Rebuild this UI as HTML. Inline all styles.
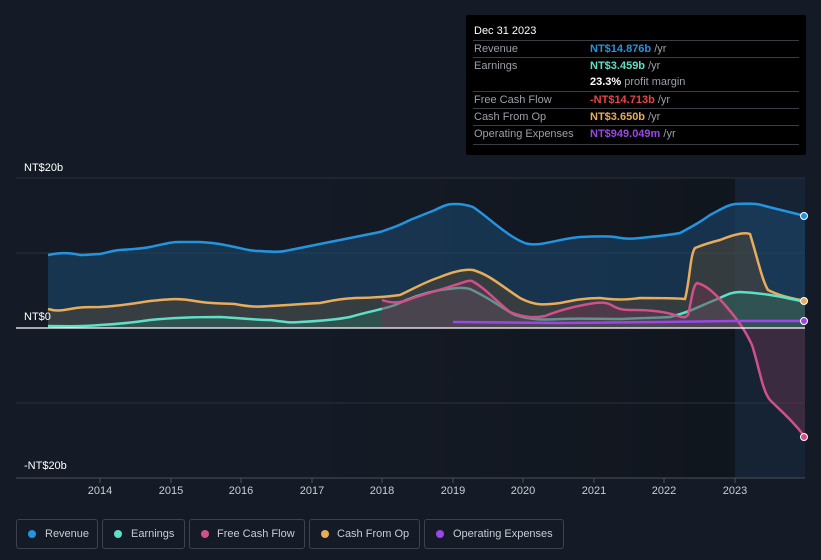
<!DOCTYPE html>
<html><head><meta charset="utf-8"><style>
body{margin:0;width:821px;height:560px;background:#151b26;font-family:"Liberation Sans",sans-serif;overflow:hidden;position:relative}
.tip{position:absolute;left:466px;top:15px;width:340px;height:140px;background:#000;border-radius:2px}
.tip .h{position:absolute;left:8px;top:10px;color:#fff;font-size:11px}
.row{position:absolute;left:7px;width:326px;border-top:1px solid #3a3d44;font-size:11px;height:17px;line-height:16px;white-space:nowrap}
.row .l{position:absolute;left:1px;color:#9aa0a8}
.row .v{position:absolute;left:117px;font-weight:bold}
.row .v span{color:#9aa0a8;font-weight:normal}
.ax{position:absolute;color:#fff;font-size:11px}
.yr{position:absolute;top:485px;color:#c8ccd2;font-size:11px;width:40px;text-align:center}
.leg{position:absolute;top:519px;height:30px;border:1px solid #3d424c;border-radius:3px;color:#c8ccd2;font-size:11px;line-height:28px;box-sizing:border-box;white-space:nowrap}
.leg i{position:absolute;left:11px;top:10px;width:8px;height:8px;border-radius:50%}
</style></head><body>
<svg width="821" height="560" style="position:absolute;left:0;top:0">
<defs>
<linearGradient id="hl" x1="0" x2="1"><stop offset="0" stop-color="#0d1218" stop-opacity="0"/><stop offset="1" stop-color="#0d1218" stop-opacity=".6"/></linearGradient>
</defs>
<rect x="300" y="178" width="435" height="300" fill="url(#hl)"/>
<rect x="735" y="178" width="70" height="300" fill="#16263a" opacity=".7"/>
<g stroke="#2c323c" stroke-width="1">
<line x1="16" y1="178" x2="805" y2="178"/><line x1="16" y1="253" x2="805" y2="253"/>
<line x1="16" y1="403" x2="805" y2="403"/><line x1="16" y1="478" x2="805" y2="478" stroke="#4a505a"/>
</g>
<path d="M48,328 L48,255 C58,253 68,252 80,255 C90,255 95,254 100,254 C110,252 115,250 120,250 C135,249 140,249 150,247 C165,244 170,242 180,242 C190,242 195,242 200,242 C215,243 220,244 230,246 C245,249 250,251 260,251 C275,252 280,252 285,251 C295,249 300,248 310,246 C325,243 330,242 340,240 C355,237 365,235 380,232 C395,227 400,225 410,220 C425,214 430,212 435,210 C445,205 448,204 455,204 C465,204 470,206 473,207 C485,215 495,225 510,235 C525,245 530,245 540,244 C555,242 565,238 580,237 C600,236 608,236 615,237 C625,239 630,239 640,238 C660,236 670,235 680,233 C695,225 700,222 710,215 C725,207 728,205 735,204 C755,203 758,204 765,206 C780,210 790,212 805,216 L805,328Z" fill="#1b4a72" opacity=".55"/>
<path d="M48,255 C58,253 68,252 80,255 C90,255 95,254 100,254 C110,252 115,250 120,250 C135,249 140,249 150,247 C165,244 170,242 180,242 C190,242 195,242 200,242 C215,243 220,244 230,246 C245,249 250,251 260,251 C275,252 280,252 285,251 C295,249 300,248 310,246 C325,243 330,242 340,240 C355,237 365,235 380,232 C395,227 400,225 410,220 C425,214 430,212 435,210 C445,205 448,204 455,204 C465,204 470,206 473,207 C485,215 495,225 510,235 C525,245 530,245 540,244 C555,242 565,238 580,237 C600,236 608,236 615,237 C625,239 630,239 640,238 C660,236 670,235 680,233 C695,225 700,222 710,215 C725,207 728,205 735,204 C755,203 758,204 765,206 C780,210 790,212 805,216" fill="none" stroke="#2394df" stroke-width="2.5"/>
<path d="M48,328 L48,309 C55,311 60,311 70,309 C80,307 85,307 100,307 C120,306 130,304 150,301 C170,299 180,298 195,301 C210,304 220,303 235,304 C250,307 258,307 270,306 C290,305 300,304 320,303 C335,300 340,299 355,298 C370,298 385,297 400,295 C415,288 425,282 440,277 C455,271 465,269 473,270 C490,275 500,285 520,298 C535,306 545,305 560,303 C575,300 585,298 600,298 C615,300 625,300 640,298 C660,298 675,298 685,299 C690,280 690,255 695,248 C705,244 712,242 720,240 C735,234 745,232 750,234 C758,260 762,280 768,290 C780,296 790,298 805,301 L805,328Z" fill="#5a4a30" opacity=".45"/>
<path d="M48,309 C55,311 60,311 70,309 C80,307 85,307 100,307 C120,306 130,304 150,301 C170,299 180,298 195,301 C210,304 220,303 235,304 C250,307 258,307 270,306 C290,305 300,304 320,303 C335,300 340,299 355,298 C370,298 385,297 400,295 C415,288 425,282 440,277 C455,271 465,269 473,270 C490,275 500,285 520,298 C535,306 545,305 560,303 C575,300 585,298 600,298 C615,300 625,300 640,298 C660,298 675,298 685,299 C690,280 690,255 695,248 C705,244 712,242 720,240 C735,234 745,232 750,234 C758,260 762,280 768,290 C780,296 790,298 805,301" fill="none" stroke="#e8ac5a" stroke-width="2.5"/>
<path d="M48,328 L48,326 C65,326 80,327 100,325 C120,324 130,323 150,320 C170,318 190,317 220,317 C240,318 255,320 270,320 C285,322 290,323 300,322 C320,321 335,320 350,317 C370,311 385,309 395,305 C410,298 425,293 440,290 C455,288 462,287 470,289 C490,298 500,307 515,315 C530,320 545,320 560,319 C580,318 600,319 620,319 C640,318 655,318 670,317 C690,312 700,306 715,300 C725,296 730,292 740,292 C760,293 775,295 805,302 L805,328Z" fill="#2c6b62" opacity=".45"/>
<path d="M48,326 C65,326 80,327 100,325 C120,324 130,323 150,320 C170,318 190,317 220,317 C240,318 255,320 270,320 C285,322 290,323 300,322 C320,321 335,320 350,317 C370,311 385,309 395,305 C410,298 425,293 440,290 C455,288 462,287 470,289 C490,298 500,307 515,315 C530,320 545,320 560,319 C580,318 600,319 620,319 C640,318 655,318 670,317 C690,312 700,306 715,300 C725,296 730,292 740,292 C760,293 775,295 805,302" fill="none" stroke="#5ee0c6" stroke-width="2.5"/>
<path d="M382,328 L382,300 C390,303 398,303 405,301 C420,295 440,290 455,285 C465,282 468,280 472,281 C485,288 495,300 510,312 C525,318 535,318 545,316 C560,310 575,306 595,303 C605,302 608,303 613,306 C620,310 625,310 635,310 C650,310 665,312 675,315 C683,318 685,318 688,315 C692,298 693,285 697,283 C705,285 712,290 725,305 C738,320 745,330 752,345 C760,370 762,390 770,400 C780,410 792,420 805,437 L805,328Z" fill="#6a3550" opacity=".45"/>
<path d="M382,300 C390,303 398,303 405,301 C420,295 440,290 455,285 C465,282 468,280 472,281 C485,288 495,300 510,312 C525,318 535,318 545,316 C560,310 575,306 595,303 C605,302 608,303 613,306 C620,310 625,310 635,310 C650,310 665,312 675,315 C683,318 685,318 688,315 C692,298 693,285 697,283 C705,285 712,290 725,305 C738,320 745,330 752,345 C760,370 762,390 770,400 C780,410 792,420 805,437" fill="none" stroke="#d0508a" stroke-width="2.5"/>
<path d="M453,322 L560,323 L660,322 L735,321 L805,321" fill="none" stroke="#9b46e8" stroke-width="2.5"/>
<line x1="16" y1="328" x2="805" y2="328" stroke="#fff" stroke-width="1.2"/>
<g stroke="#fff" stroke-width="1">
<circle cx="804" cy="216" r="3.5" fill="#2394df"/><circle cx="804" cy="301" r="3.5" fill="#e8ac5a"/>
<circle cx="804" cy="321" r="3.5" fill="#9b46e8"/><circle cx="804" cy="437" r="3.5" fill="#d0508a"/>
</g>
<g stroke="#4a505a"><line x1="100" y1="478" x2="100" y2="483"/><line x1="171" y1="478" x2="171" y2="483"/><line x1="241" y1="478" x2="241" y2="483"/><line x1="312" y1="478" x2="312" y2="483"/><line x1="382" y1="478" x2="382" y2="483"/><line x1="453" y1="478" x2="453" y2="483"/><line x1="523" y1="478" x2="523" y2="483"/><line x1="594" y1="478" x2="594" y2="483"/><line x1="664" y1="478" x2="664" y2="483"/><line x1="735" y1="478" x2="735" y2="483"/></g>
</svg>
<div class="ax" style="left:24px;top:162px">NT$20b</div>
<div class="ax" style="left:24px;top:311px">NT$0</div>
<div class="ax" style="left:24px;top:460px">-NT$20b</div>
<div class="yr" style="left:80px">2014</div><div class="yr" style="left:151px">2015</div><div class="yr" style="left:221px">2016</div><div class="yr" style="left:292px">2017</div><div class="yr" style="left:362px">2018</div><div class="yr" style="left:433px">2019</div><div class="yr" style="left:503px">2020</div><div class="yr" style="left:574px">2021</div><div class="yr" style="left:644px">2022</div><div class="yr" style="left:715px">2023</div>
<div class="tip">
<div class="h">Dec 31 2023</div>
<div class="row" style="top:25px"><span class="l">Revenue</span><span class="v" style="color:#2394df">NT$14.876b <span>/yr</span></span></div>
<div class="row" style="top:42px"><span class="l">Earnings</span><span class="v" style="color:#5ee0c6">NT$3.459b <span>/yr</span></span></div>
<div class="row" style="top:59px;border-top:none"><span class="v" style="color:#fff">23.3% <span>profit margin</span></span></div>
<div class="row" style="top:76px"><span class="l">Free Cash Flow</span><span class="v" style="color:#e84545">-NT$14.713b <span>/yr</span></span></div>
<div class="row" style="top:93px"><span class="l">Cash From Op</span><span class="v" style="color:#e8ac5a">NT$3.650b <span>/yr</span></span></div>
<div class="row" style="top:110px"><span class="l">Operating Expenses</span><span class="v" style="color:#9b46e8">NT$949.049m <span>/yr</span></span></div>
<div class="row" style="top:129px;height:0"></div>
</div>
<div class="leg" style="left:16px;width:82px"><i style="background:#2394df"></i><span style="position:absolute;left:28px">Revenue</span></div>
<div class="leg" style="left:102px;width:83px"><i style="background:#5ee0c6"></i><span style="position:absolute;left:28px">Earnings</span></div>
<div class="leg" style="left:189px;width:116px"><i style="background:#d0508a"></i><span style="position:absolute;left:27px">Free Cash Flow</span></div>
<div class="leg" style="left:309px;width:111px"><i style="background:#e8ac5a"></i><span style="position:absolute;left:27px">Cash From Op</span></div>
<div class="leg" style="left:424px;width:140px"><i style="background:#9b46e8"></i><span style="position:absolute;left:28px">Operating Expenses</span></div>
</body></html>
